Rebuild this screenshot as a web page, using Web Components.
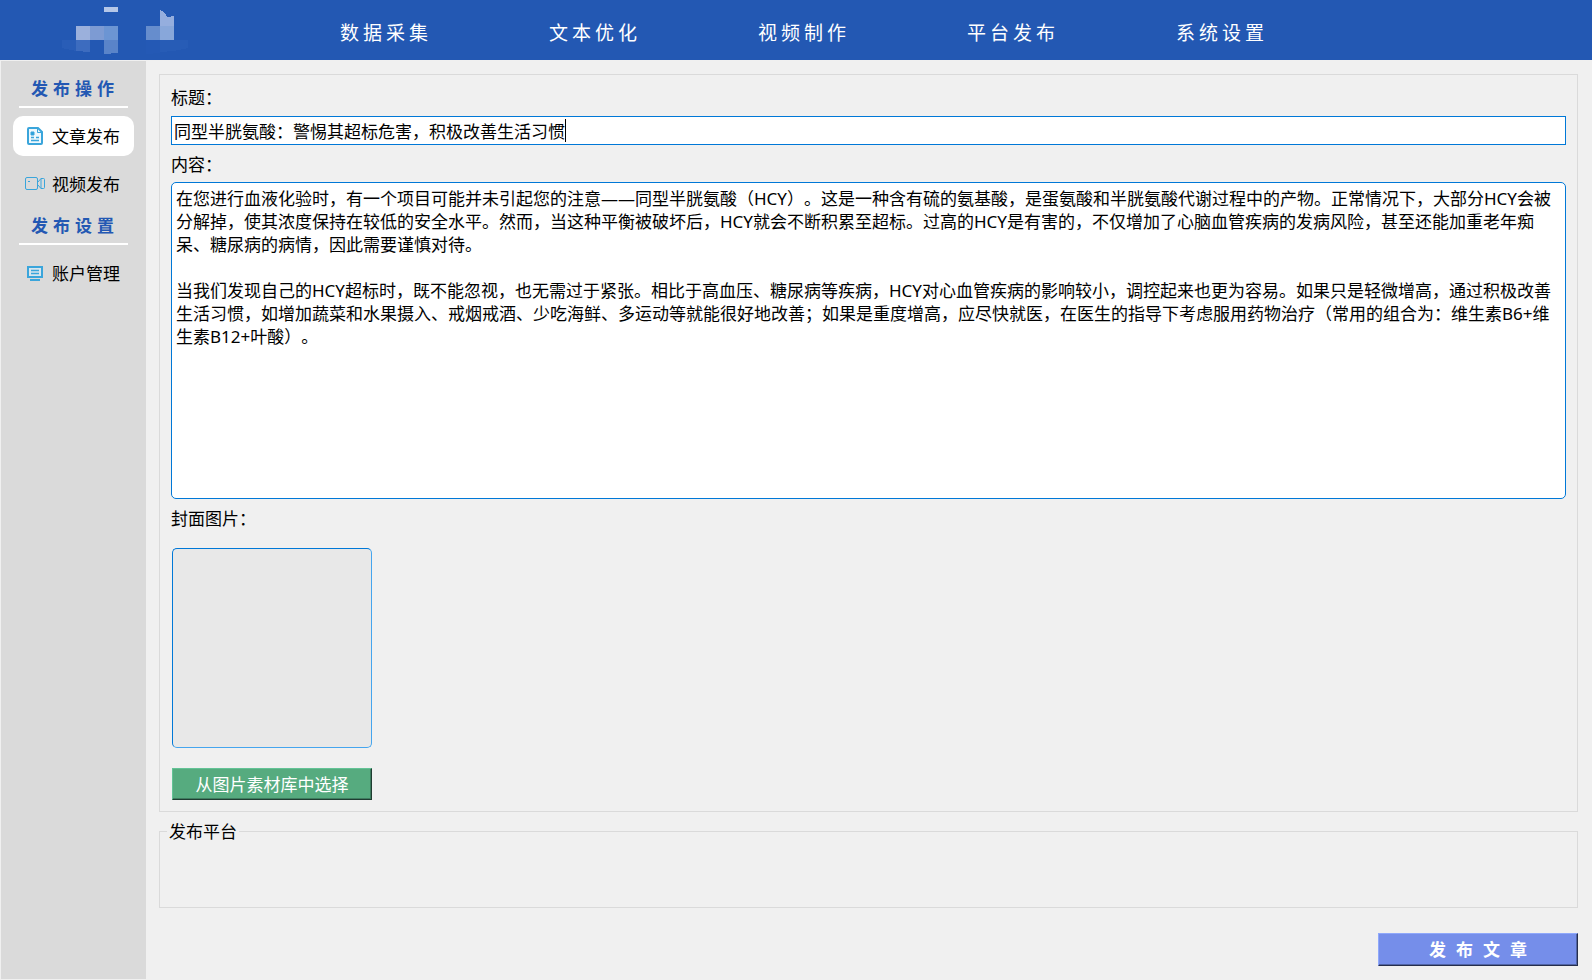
<!DOCTYPE html>
<html lang="zh-CN">
<head>
<meta charset="utf-8">
<title>文章发布</title>
<style>
html { font: 17px/23px "Noto Sans", "Noto Sans CJK SC", sans-serif; text-spacing-trim: space-all; color: #000; background: #f0f0f0; }
body { margin: 0; }
</style>
</head>
<body>
<publish-app></publish-app>
<script>
const define = (name, html, setup) => {
  const template = document.createElement('template');
  template.innerHTML = html;
  customElements.define(name, class extends HTMLElement {
    constructor() {
      super();
      this.attachShadow({ mode: 'open' }).append(template.content.cloneNode(true));
    }
    connectedCallback() { if (setup) setup(this, this.shadowRoot); }
  });
};

define('brand-mark', `
<style>:host { display: block; width: 128px; height: 60px; } svg { display: block; }</style>
<svg width="128" height="60" viewBox="62 0 128 60" shape-rendering="crispEdges" aria-hidden="true">
  <path fill="#b5c7e8" d="M104 7h14v5h-14z"/>
  <path fill="#9bb0dc" d="M76 26h14v14H76z"/>
  <path fill="#7d9bd3" d="M90 26h14v14H90z"/>
  <path fill="#6c95d3" d="M104 26h14v14h-14z"/>
  <path fill="#295db7" d="M62 40h14v11l-14-3z"/>
  <path fill="#3d6cbf" d="M76 40h14v12l-14-1z"/>
  <path fill="#5a84c9" d="M104 40h14v13l-14 1z"/>
  <path fill="#668dcd" d="M146 26h14v14h-14z"/>
  <path fill="#95aede" d="M160 10q5 1 7 7l7-1v10h-14z"/>
  <path fill="#88a7da" d="M160 26h14v14h-14z"/>
  <path fill="#2459b5" d="M146 40h14v13l-14 1z"/>
  <path fill="#275cb6" d="M160 40h28v8l-14 3-14 1z"/>
</svg>`);

define('app-header', `
<style>
:host { display: flex; height: 60px; padding-left: 62px; background: #2358b3; }
nav { display: flex; margin-left: 150px; padding-top: 22px; }
a { width: 209px; color: #fff; text-decoration: none; font-size: 19px; line-height: 23px; letter-spacing: 4px; }
</style>
<brand-mark></brand-mark>
<nav><a href="#data">数据采集</a><a href="#text">文本优化</a><a href="#video">视频制作</a><a href="#platform">平台发布</a><a href="#system">系统设置</a></nav>`);

define('side-group', `
<style>
:host { display: block; }
h2 { margin: 0 6px 8px; padding-left: 12px; border-bottom: 2px solid #fff; color: #2358b3; font-size: 17px; line-height: 34px; letter-spacing: 5px; }
nav { display: flex; flex-direction: column; gap: 8px; }
</style>
<h2><slot name="heading"></slot></h2>
<nav><slot></slot></nav>`);

const icons = {
  article: `<path d="M5 3h9l4 4v11q0 1-1 1H5q-1 0-1-1V4q0-1 1-1z" stroke-width="2" fill="#eef8fd"/><path d="M13.500 3v4.500H18"/><path d="M7 7h3v3H7z" fill="#2a9fdb"/><path d="M7 12.500h3M12 12.500h3M7 15.500h8" stroke-width="1.500"/>`,
  video: `<rect x="1.500" y="4.500" width="12" height="12" rx="1.500"/><path d="M13.500 9.500l3.500-4h2.500q1 0 1 1v8q0 1-1 1H17l-3.500-4M17 5.500v10M4 8.500h2"/>`,
  account: `<path d="M4 5h14v10H4z" stroke-width="2" fill="#d8e6ee"/><path d="M7 8.500h8M7 11.500h8" stroke-width="1.500"/><path d="M6 18h10" stroke-width="2"/>`
};
define('side-item', `
<style>
:host { display: block; }
a { display: flex; align-items: center; height: 40px; padding-left: 11px; gap: 6px; border-radius: 10px; color: #000; text-decoration: none; }
:host([current]) a { background: #fff; }
svg { width: 22px; height: 22px; flex: none; fill: none; stroke: #3aa5db; }
</style>
<a><svg viewBox="0 0 22 22" aria-hidden="true"></svg><span><slot></slot></span></a>`, (host, root) => {
  root.querySelector('svg').innerHTML = icons[host.getAttribute('icon')];
  root.querySelector('a').href = '#' + host.getAttribute('icon');
});

define('side-bar', `
<style>:host { display: flex; flex-direction: column; gap: 5px; box-sizing: border-box; width: 145px; flex: none; margin: 1px 0 1px 1px; padding: 11px 12px; background: #dadada; }</style>
<side-group><span slot="heading">发布操作</span>
  <side-item icon="article" current>文章发布</side-item>
  <side-item icon="video">视频发布</side-item>
</side-group>
<side-group><span slot="heading">发布设置</span>
  <side-item icon="account">账户管理</side-item>
</side-group>`);

define('push-button', `
<style>
:host { display: block; width: 200px; }
button { box-sizing: border-box; width: 100%; height: 32px; padding: 0; border: 1px solid; border-color: #63c396 #1f3d31 #1f3d31 #63c396; box-shadow: inset -1px -1px #3f7d60; background: #56ab7f; color: #fff; font: inherit; }
:host([primary]) button { height: 33px; padding-left: 10px; border-color: #8fa8fb #262e4c #262e4c #8fa8fb; box-shadow: inset -1px -1px #5064a4; background: #758eea; font-weight: 700; letter-spacing: 10px; }
</style>
<button type="button"><slot></slot></button>`);

define('article-form', `
<style>
:host { display: flex; flex-direction: column; flex: 1; padding: 11px; border: 1px solid #dadada; }
input, textarea { box-sizing: border-box; width: 100%; margin: 0; border: 1px solid #0078d7; background: #fff; color: inherit; font: inherit; text-spacing-trim: inherit; outline: none; }
.title { position: relative; margin: 7px 0 8px; }
input { display: block; height: 29px; padding: 0 2px; }
.caret { position: absolute; left: calc(3px + 23em); top: 3px; width: 1px; height: 23px; background: #000; }
textarea { flex: 1; min-height: 160px; margin: 6px 0 8px; padding: 4px; border-radius: 5px; resize: none; overflow: hidden; }
.cover { box-sizing: border-box; width: 200px; height: 200px; margin: 18px 0 20px 1px; border: 1px solid; border-color: #0078d7 #45a5ee #45a5ee #0078d7; border-radius: 5px; background: #e8e8e8; }
push-button { margin-left: 1px; }
</style>
<label for="title">标题：</label>
<div class="title"><input id="title" value="同型半胱氨酸：警惕其超标危害，积极改善生活习惯"><span class="caret"></span></div>
<label for="content">内容：</label>
<textarea id="content" spellcheck="false">在您进行血液化验时，有一个项目可能并未引起您的注意——同型半胱氨酸（HCY）。这是一种含有硫的氨基酸，是蛋氨酸和半胱氨酸代谢过程中的产物。正常情况下，大部分HCY会被分解掉，使其浓度保持在较低的安全水平。然而，当这种平衡被破坏后，HCY就会不断积累至超标。过高的HCY是有害的，不仅增加了心脑血管疾病的发病风险，甚至还能加重老年痴呆、糖尿病的病情，因此需要谨慎对待。

当我们发现自己的HCY超标时，既不能忽视，也无需过于紧张。相比于高血压、糖尿病等疾病，HCY对心血管疾病的影响较小，调控起来也更为容易。如果只是轻微增高，通过积极改善生活习惯，如增加蔬菜和水果摄入、戒烟戒酒、少吃海鲜、多运动等就能很好地改善；如果是重度增高，应尽快就医，在医生的指导下考虑服用药物治疗（常用的组合为：维生素B6+维生素B12+叶酸）。</textarea>
<div id="cover-label">封面图片：</div>
<div class="cover" role="img" aria-labelledby="cover-label"></div>
<push-button>从图片素材库中选择</push-button>`);

define('platform-group', `
<style>
:host { display: block; }
fieldset { box-sizing: border-box; height: 88px; margin: 0; padding: 0 7px; border: 1px solid #dadada; }
legend { padding: 0 2px; }
</style>
<fieldset><legend>发布平台</legend><slot></slot></fieldset>`);

define('publish-app', `
<style>
:host { display: flex; flex-direction: column; min-height: 100vh; }
.body { display: flex; flex: 1; }
main { display: flex; flex-direction: column; flex: 1; min-width: 0; padding: 14px 14px 14px 13px; }
platform-group { margin: 8px 0 25px; }
push-button { align-self: flex-end; }
</style>
<app-header></app-header>
<div class="body">
  <side-bar></side-bar>
  <main>
    <article-form></article-form>
    <platform-group></platform-group>
    <push-button primary>发布文章</push-button>
  </main>
</div>`);
</script>
</body>
</html>
